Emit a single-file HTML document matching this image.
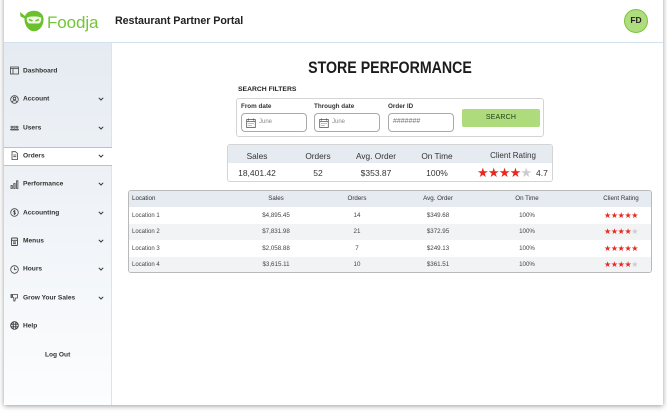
<!DOCTYPE html>
<html><head><meta charset="utf-8">
<style>
*{box-sizing:border-box}
html,body{margin:0;padding:0;width:667px;height:413px;overflow:hidden;background:#fff;font-family:"Liberation Sans",sans-serif;color:#222}
.a{position:absolute;white-space:nowrap}
.c{transform:translateX(-50%)}
#page{position:absolute;left:4px;top:-4px;width:659px;height:409px;background:#fff;box-shadow:0 1px 5px rgba(0,0,0,.4)}
#side{position:absolute;left:4px;top:43px;width:108px;height:362px;background:linear-gradient(#e5ebf2,#fcfdfe);border-right:1px solid #d9e4ee}
#hl{position:absolute;left:4px;top:42px;width:659px;height:1px;background:#d4e2ee}
.n{font-size:6.6px;font-weight:bold;color:#333;left:23px;transform:translateY(-50%)}
.ch{position:absolute;left:98px;width:6px;height:4px}
.ic{position:absolute;left:10px;width:9px;height:9px}
.box{position:absolute;background:#fff;border:1px solid #d4d4d4;border-radius:3px}
.inp{position:absolute;top:113px;width:66px;height:19px;border:1px solid #aaa;border-radius:4px;background:#fff;font-size:6px;color:#888}
.inp span{position:absolute;left:17px;top:5px}
.inp svg{position:absolute;left:4px;top:4px}
.lb{font-size:6.3px;color:#333;font-weight:bold;top:103px}
.h1{font-size:8.3px;color:#333;top:151px}
.v1{font-size:8.5px;color:#333;top:168px}
.t{font-size:6.2px;line-height:7px;color:#444}
.l{font-size:6px;margin-top:1px}
.th{font-size:6.2px;line-height:7px;color:#333}
.s{color:#e8281e}.g{color:#ccc}
.st{font-size:8px;letter-spacing:-.35px;line-height:8px}
</style></head><body>
<div id="page"></div>
<div id="side"></div>
<div id="hl"></div>

<!-- logo -->
<svg class="a" style="left:20px;top:10px" width="26" height="23" viewBox="0 0 26 23">
<path d="M4.500 8C5 3.500 9 .8 14 .8s9 3 9.500 7.500c.5 7-4 13-9.500 13S4 15 4.500 8z" fill="#6cc02c"/>
<path d="M5 6L0 2 .5 6.500 5 8.500z" fill="#6cc02c"/>
<path d="M7 7.500c4-1.500 10-1.500 14 0 .8 2.500-.5 6-2.500 6h-9C7.500 13.500 6.200 10 7 7.500z" fill="#eef7e4"/>
<path d="M9 9.500l3.500 1.400M19 9.500l-3.500 1.400" stroke="#6cc02c" stroke-width="1.500"/>
</svg>
<div class="a" style="left:47px;top:12px;font-size:17px;line-height:22px;color:#72c536;letter-spacing:-.1px">Foodja</div>
<div class="a" style="left:115px;top:15px;font-size:10.700px;line-height:13px;color:#222;font-weight:bold;letter-spacing:-.05px">Restaurant Partner Portal</div>
<div class="a" style="left:624px;top:9px;width:24px;height:24px;border-radius:50%;background:#afdc7e;border:1.500px solid #79c63c;font-size:8.500px;font-weight:bold;line-height:21px;text-align:center;color:#222">FD</div>

<!-- sidebar -->
<div class="a" style="left:4px;top:147px;width:108px;height:19px;background:#fff;border-top:1px solid #b5c3cf;border-bottom:1px solid #b5c3cf"></div>

<svg class="ic" style="top:66px" viewBox="0 0 9 9" fill="none" stroke="#444" stroke-width=".8"><rect x=".5" y="1" width="8" height="7"/><path d="M.5 2.500h8M3 2.500V8"/></svg>
<div class="a n" style="top:71px">Dashboard</div>
<svg class="ic" style="top:95px" viewBox="0 0 9 9" fill="none" stroke="#444" stroke-width=".8"><circle cx="4.500" cy="4.500" r="3.800"/><circle cx="4.500" cy="3.500" r="1.300"/><path d="M2 7c1-1.800 4-1.800 5 0"/></svg>
<div class="a n" style="top:99px">Account</div>
<svg class="ic" style="top:123px" viewBox="0 0 9 9" fill="none" stroke="#444" stroke-width=".7"><circle cx="1.800" cy="4" r=".9"/><circle cx="4.500" cy="4" r=".9"/><circle cx="7.200" cy="4" r=".9"/><path d="M.5 7c0-1.500 2.500-1.500 2.700 0M3.200 7c0-1.500 2.500-1.500 2.700 0M5.900 7c0-1.500 2.500-1.500 2.700 0M.5 7h8"/></svg>
<div class="a n" style="top:128px">Users</div>
<svg class="ic" style="top:151px" viewBox="0 0 9 9" fill="none" stroke="#444" stroke-width=".8"><path d="M2 .7h3.500L7.500 2.500v6H2zM3.300 4h3M3.300 5.700h3"/></svg>
<div class="a n" style="top:156px">Orders</div>
<svg class="ic" style="top:180px" viewBox="0 0 9 9" fill="none" stroke="#444" stroke-width=".8"><path d="M1 5.500h1.300v3H1zM3.800 3.500h1.300v5H3.800zM6.600 .8h1.300v7.700H6.600z"/></svg>
<div class="a n" style="top:184px">Performance</div>
<svg class="ic" style="top:208px" viewBox="0 0 9 9" fill="none" stroke="#444" stroke-width=".8"><circle cx="4.500" cy="4.500" r="3.800"/><path d="M4.500 2v5M5.500 3.200c-.8-.6-2-.4-2 .4s2 .8 2 1.700-1.200 1-2 .4"/></svg>
<div class="a n" style="top:213px">Accounting</div>
<svg class="ic" style="top:237px" viewBox="0 0 9 9" fill="none" stroke="#444" stroke-width=".9"><rect x="1.500" y="1" width="6" height="7.500" rx=".8"/><path d="M1.500 3.300h6M3 5h3M3 6.700h3"/></svg>
<div class="a n" style="top:241px">Menus</div>
<svg class="ic" style="top:265px" viewBox="0 0 9 9" fill="none" stroke="#444" stroke-width=".8"><circle cx="4.500" cy="4.500" r="3.800"/><path d="M4.500 2.200v2.500h2"/></svg>
<div class="a n" style="top:269px">Hours</div>
<svg class="ic" style="top:293px" viewBox="0 0 9 9" fill="none" stroke="#444" stroke-width=".8"><path d="M2.500 1.500h5v3.500h-2l-.6 3H3.800V5L2.500 4zM1 1.500h1v3H1z"/></svg>
<div class="a n" style="top:298px">Grow Your Sales</div>
<svg class="ic" style="top:321px" viewBox="0 0 9 9" fill="none" stroke="#333" stroke-width=".9"><circle cx="4.500" cy="4.500" r="3.800"/><path d="M.7 3.200h7.600M.7 5.800h7.600M3.200.9v7.200M5.800.9v7.200"/></svg>
<div class="a n" style="top:326px">Help</div>
<div class="a n" style="left:45px;top:355px">Log Out</div>

<svg class="ch" style="top:97px" viewBox="0 0 6 4"><path d="M.8 .8L3 3l2.200-2.200" fill="none" stroke="#333" stroke-width="1"/></svg>
<svg class="ch" style="top:126px" viewBox="0 0 6 4"><path d="M.8 .8L3 3l2.200-2.200" fill="none" stroke="#333" stroke-width="1"/></svg>
<svg class="ch" style="top:154px" viewBox="0 0 6 4"><path d="M.8 .8L3 3l2.200-2.200" fill="none" stroke="#333" stroke-width="1"/></svg>
<svg class="ch" style="top:182px" viewBox="0 0 6 4"><path d="M.8 .8L3 3l2.200-2.200" fill="none" stroke="#333" stroke-width="1"/></svg>
<svg class="ch" style="top:211px" viewBox="0 0 6 4"><path d="M.8 .8L3 3l2.200-2.200" fill="none" stroke="#333" stroke-width="1"/></svg>
<svg class="ch" style="top:239px" viewBox="0 0 6 4"><path d="M.8 .8L3 3l2.200-2.200" fill="none" stroke="#333" stroke-width="1"/></svg>
<svg class="ch" style="top:267px" viewBox="0 0 6 4"><path d="M.8 .8L3 3l2.200-2.200" fill="none" stroke="#333" stroke-width="1"/></svg>
<svg class="ch" style="top:296px" viewBox="0 0 6 4"><path d="M.8 .8L3 3l2.200-2.200" fill="none" stroke="#333" stroke-width="1"/></svg>

<!-- title -->
<div class="a" style="left:390px;top:59px;font-size:16.500px;line-height:18px;color:#1c1c1c;font-weight:bold;transform:translateX(-50%) scaleX(.86)">STORE PERFORMANCE</div>
<div class="a" style="left:238px;top:86px;font-size:6.800px;line-height:8px;color:#222;font-weight:bold">SEARCH FILTERS</div>

<!-- filter box -->
<div class="box" style="left:236px;top:98px;width:308px;height:39px"></div>
<div class="a lb" style="left:241px">From date</div>
<div class="a lb" style="left:314px">Through date</div>
<div class="a lb" style="left:388px">Order ID</div>
<div class="inp" style="left:241px"><svg width="10" height="10" viewBox="0 0 10 10" fill="none" stroke="#555" stroke-width=".8"><rect x=".7" y="1.500" width="8.600" height="8"/><path d="M.7 3.500h8.600M2.500 .5v2M7.500 .5v2M2.500 5.500h1M4.500 5.500h1M6.500 5.500h1M2.500 7.500h1M4.500 7.500h1"/></svg><span>June</span></div>
<div class="inp" style="left:314px"><svg width="10" height="10" viewBox="0 0 10 10" fill="none" stroke="#555" stroke-width=".8"><rect x=".7" y="1.500" width="8.600" height="8"/><path d="M.7 3.500h8.600M2.500 .5v2M7.500 .5v2M2.500 5.500h1M4.500 5.500h1M6.500 5.500h1M2.500 7.500h1M4.500 7.500h1"/></svg><span>June</span></div>
<div class="inp" style="left:388px"><span style="left:4px;top:4px;font-size:7px;color:#777">#######</span></div>
<div class="a" style="left:462px;top:109px;width:78px;height:18px;background:#aedb7c;border-radius:2px;font-size:7px;line-height:18px;text-align:center;color:#24401a;letter-spacing:.2px">SEARCH</div>

<!-- summary -->
<div class="box" style="left:227px;top:144px;width:326px;height:38px;overflow:hidden"><div style="height:18px;background:#e6ebf2"></div></div>
<div class="a c h1" style="left:257px">Sales</div>
<div class="a c h1" style="left:318px">Orders</div>
<div class="a c h1" style="left:376px">Avg. Order</div>
<div class="a c h1" style="left:437px">On Time</div>
<div class="a c h1" style="left:513px;font-size:8px">Client Rating</div>
<div class="a c v1" style="left:257px">18,401.42</div>
<div class="a c v1" style="left:318px">52</div>
<div class="a c v1" style="left:376px">$353.87</div>
<div class="a c v1" style="left:437px">100%</div>
<div class="a" style="left:477px;top:166px;font-size:13px;line-height:13px;letter-spacing:-.8px"><span class="s">★★★★</span><span class="g">★</span></div>
<div class="a v1" style="left:536px">4.7</div>

<!-- table -->
<div class="box" style="left:128px;top:190px;width:524px;height:83px;overflow:hidden;border-color:#b9b9b9">
<div style="height:16px;background:#e6ebf2"></div><div style="height:17px"></div><div style="height:16px;background:#f2f3f5"></div><div style="height:17px"></div><div style="height:16px;background:#f2f3f5"></div>
</div>
<div class="a th" style="left:132px;top:195px">Location</div>
<div class="a c th" style="left:276px;top:195px">Sales</div>
<div class="a c th" style="left:357px;top:195px">Orders</div>
<div class="a c th" style="left:438px;top:195px">Avg. Order</div>
<div class="a c th" style="left:527px;top:195px">On Time</div>
<div class="a c th" style="left:621px;top:195px">Client Rating</div>

<div class="a t l" style="left:132px;top:212px">Location 1</div><div class="a c t" style="left:276px;top:212px">$4,895.45</div><div class="a c t" style="left:357px;top:212px">14</div><div class="a c t" style="left:438px;top:212px">$349.68</div><div class="a c t" style="left:527px;top:212px">100%</div><div class="a st" style="left:604px;top:212px"><span class="s">★★★★★</span></div>
<div class="a t l" style="left:132px;top:228px">Location 2</div><div class="a c t" style="left:276px;top:228px">$7,831.98</div><div class="a c t" style="left:357px;top:228px">21</div><div class="a c t" style="left:438px;top:228px">$372.95</div><div class="a c t" style="left:527px;top:228px">100%</div><div class="a st" style="left:604px;top:228px"><span class="s">★★★★</span><span class="g">★</span></div>
<div class="a t l" style="left:132px;top:245px">Location 3</div><div class="a c t" style="left:276px;top:245px">$2,058.88</div><div class="a c t" style="left:357px;top:245px">7</div><div class="a c t" style="left:438px;top:245px">$249.13</div><div class="a c t" style="left:527px;top:245px">100%</div><div class="a st" style="left:604px;top:245px"><span class="s">★★★★★</span></div>
<div class="a t l" style="left:132px;top:261px">Location 4</div><div class="a c t" style="left:276px;top:261px">$3,615.11</div><div class="a c t" style="left:357px;top:261px">10</div><div class="a c t" style="left:438px;top:261px">$361.51</div><div class="a c t" style="left:527px;top:261px">100%</div><div class="a st" style="left:604px;top:261px"><span class="s">★★★★</span><span class="g">★</span></div>
</body></html>
